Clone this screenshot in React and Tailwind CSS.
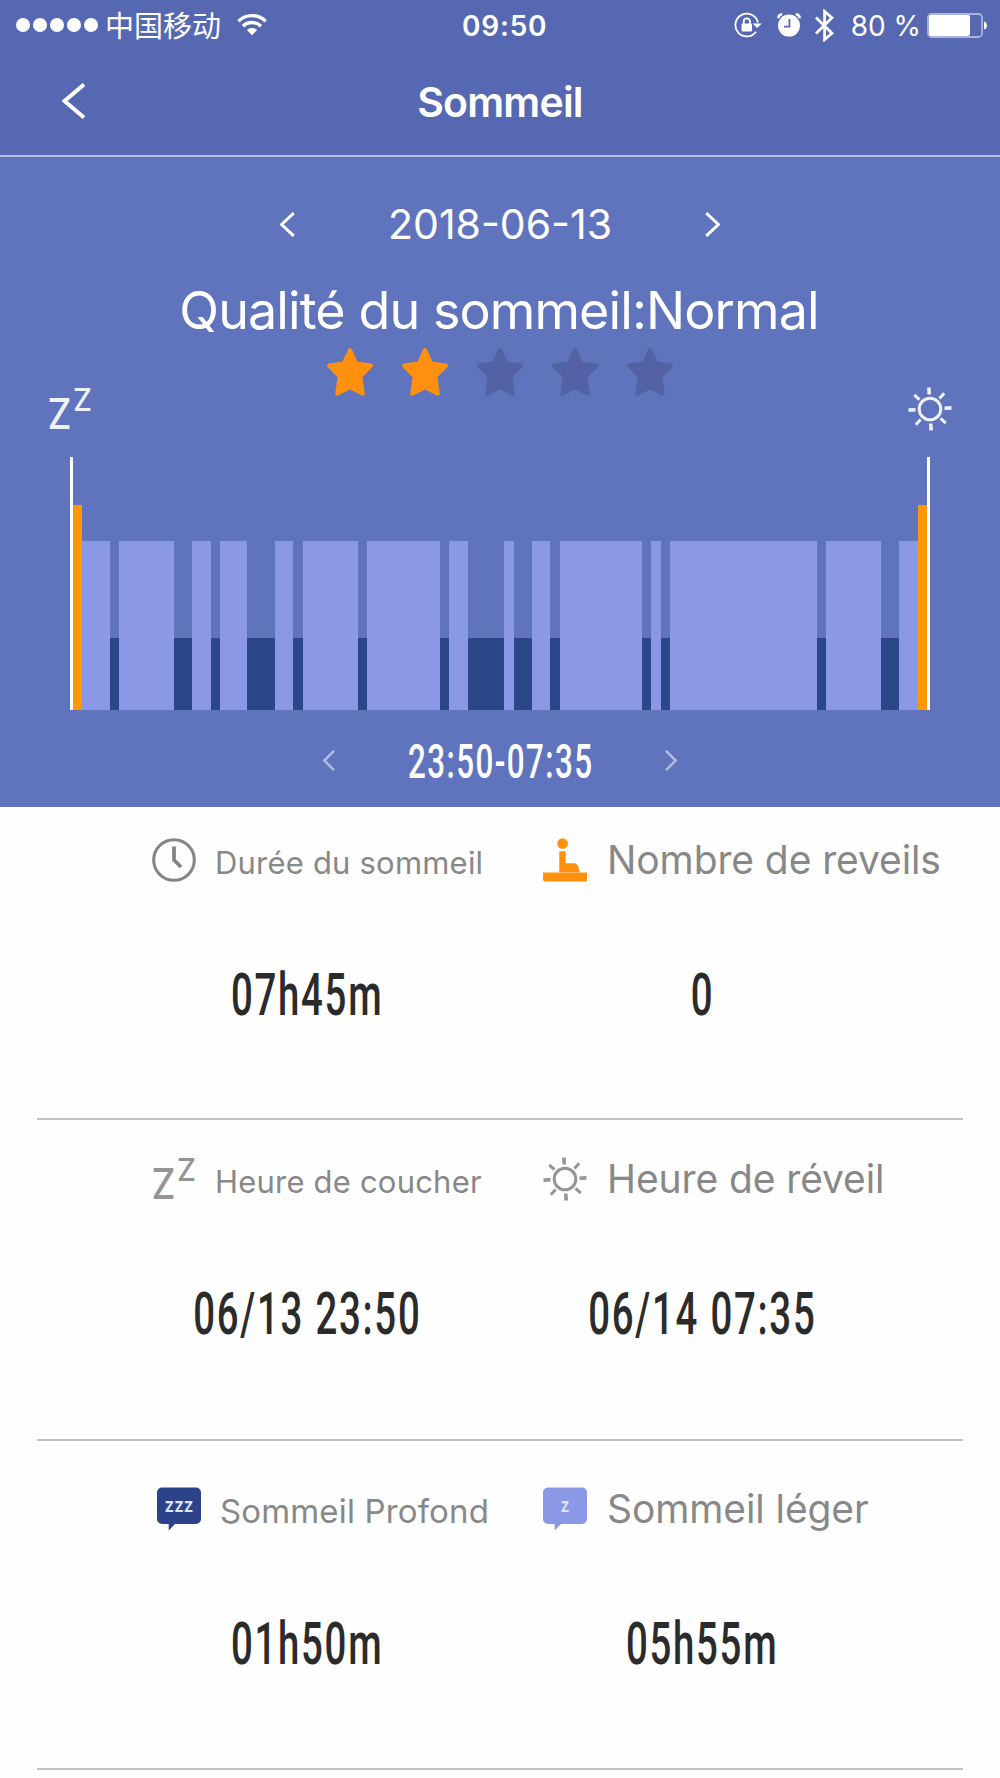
import clsx from 'clsx';

// Sleep phases of the night, each one as [type, number of 5 minute slots]
const PHASES = [
  ['awake', 1], ['light', 3], ['deep', 1], ['light', 6], ['deep', 2], ['light', 2],
  ['deep', 1], ['light', 3], ['deep', 3], ['light', 2], ['deep', 1], ['light', 6],
  ['deep', 1], ['light', 8], ['deep', 1], ['light', 2], ['deep', 4], ['light', 1],
  ['deep', 2], ['light', 2], ['deep', 1], ['light', 9], ['deep', 1], ['light', 1],
  ['deep', 1], ['light', 16], ['deep', 1], ['light', 6], ['deep', 2], ['light', 2],
  ['awake', 1],
];

const PHASE_STYLES = {
  awake: 'h-[205px] bg-[#ff9800]',
  light: 'h-[169px] bg-[#8b98e6]',
  deep: 'h-[72px] bg-[#2c4789]',
};

function Chevron({ right, className, strokeWidth = 3 }) {
  return (
    <svg viewBox="0 0 24 36" fill="none" stroke="currentColor" strokeWidth={strokeWidth} preserveAspectRatio="none" className={className}>
      <path d={right ? 'M2 1.5 21.5 18 2 34.5' : 'M22 1.5 2.5 18 22 34.5'} vectorEffect="non-scaling-stroke" />
    </svg>
  );
}

function WifiIcon() {
  return (
    <svg viewBox="0 0 30 23" className="w-[30px] h-[23px]" fill="none" stroke="currentColor" strokeWidth="3.4">
      <path d="M1.4 8.2a19.5 19.5 0 0 1 27.2 0" />
      <path d="M6 13.2a12.8 12.8 0 0 1 18 0" />
      <path d="M15 22.2 9.9 17a7.3 7.3 0 0 1 10.2 0Z" fill="currentColor" stroke="none" />
    </svg>
  );
}

function RotationLockIcon() {
  return (
    <svg viewBox="0 0 28 26" className="w-7 h-[26px]" fill="none" stroke="currentColor">
      <path d="M23.9 10.5A11.4 11.4 0 1 0 22 19.8" strokeWidth="1.8" />
      <path d="M18.6 11.5h9.2l-4.6 4.4Z" fill="currentColor" stroke="none" />
      <rect x="7.6" y="11.6" width="10.4" height="7.8" rx="1" fill="currentColor" stroke="none" />
      <path d="M9.7 12V9.4a3.1 3.1 0 0 1 6.2 0V12" strokeWidth="1.8" />
    </svg>
  );
}

function AlarmIcon() {
  return (
    <svg viewBox="0 0 24 24" className="w-6 h-6" fill="none" stroke="currentColor">
      <circle cx="12" cy="12.6" r="11" fill="currentColor" stroke="none" />
      <path d="M1.6 5.2a3 3 0 0 1 3.6-3.6M22.4 5.2a3 3 0 0 0-3.6-3.6" strokeWidth="2.6" />
      <path d="M12.4 6v7.6H7" stroke="#5668b2" strokeWidth="1.8" />
    </svg>
  );
}

function BluetoothIcon() {
  return (
    <svg viewBox="0 0 19 33" className="w-[19px] h-[33px]" fill="none" stroke="currentColor" strokeWidth="2.8">
      <path d="M1 8.5 17 24.2 9.6 30.6V2.4L17 8.8 1 24.5" />
    </svg>
  );
}

function BatteryIcon() {
  return (
    <svg viewBox="0 0 60 25" className="w-[60px] h-[25px]">
      <rect x="1" y="1" width="54" height="23" rx="3.5" fill="none" stroke="#aab4dc" strokeWidth="1.8" />
      <rect x="2" y="2" width="41" height="21" rx="2" fill="#fff" />
      <path d="M57 8.5c4 1 4 7 0 8Z" fill="#fff" />
    </svg>
  );
}

function SnoreIcon({ className }) {
  return (
    <svg viewBox="0 0 44 44" className={clsx('w-11 h-11 overflow-visible', className)} fill="currentColor" fontFamily="Inter, sans-serif" fontWeight="500">
      <text x="-0.5" y="42" fontSize="42" textLength="24" lengthAdjust="spacingAndGlyphs">Z</text>
      <text x="25" y="23.5" fontSize="31" textLength="19" lengthAdjust="spacingAndGlyphs">Z</text>
    </svg>
  );
}

function SunIcon({ className }) {
  return (
    <svg viewBox="0 0 44 44" className={clsx('w-11 h-11', className)} fill="none" stroke="currentColor">
      <circle cx="22" cy="22" r="10.8" strokeWidth="3" />
      <g strokeWidth="3.6" transform="rotate(-3 22 22)">
        <path d="M22 .5v7M22 36.5v7M.5 22h7M36.5 22h7" />
        <path d="m7 7 5 5M32 32l5 5M7 37l5-5M32 12l5-5" strokeWidth="3" />
      </g>
    </svg>
  );
}

function ClockIcon() {
  return (
    <svg viewBox="0 0 44 44" className="w-11 h-11 text-[#858585]" fill="none" stroke="currentColor">
      <circle cx="22" cy="22" r="20.3" strokeWidth="3" />
      <path d="M22 8.5V22l7 7" strokeWidth="3.8" />
    </svg>
  );
}

function WakeIcon() {
  return (
    <svg viewBox="0 0 44 44" className="w-11 h-11" fill="#ff9010">
      <circle cx="19.6" cy="5.6" r="5.3" />
      <path d="M16.3 13.3h6.4v12h8.6c3 0 4.2 3 5.4 8.9H15.6c.7-.7.7-1.6.7-3Z" />
      <path d="M0 34.6h44v9H2a2 2 0 0 1-2-2Z" />
    </svg>
  );
}

function BubbleIcon({ label, labelWidth, className }) {
  return (
    <svg viewBox="0 0 44 44" className={clsx('w-11 h-11', className)}>
      <path d="M5 .5h34a5 5 0 0 1 5 5V32a5 5 0 0 1-5 5H18l-6.3 6.5V37H5a5 5 0 0 1-5-5V5.5a5 5 0 0 1 5-5Z" fill="currentColor" />
      <text
        x="22"
        y="25"
        fontSize="20"
        fontWeight="600"
        textAnchor="middle"
        fill="#dfe4f6"
        fontFamily="Inter, sans-serif"
        textLength={labelWidth}
        lengthAdjust="spacingAndGlyphs"
      >
        {label}
      </text>
    </svg>
  );
}

function Star({ filled }) {
  return (
    <svg viewBox="0 0 48 50" className={clsx('w-12 h-[50px]', filled ? 'text-[#ff9010]' : 'text-[#5262a4]')}>
      <path
        d="M24 3 30.3 16.6 45 18.6 34.3 29.5 36.8 46.8 24 40.3 11.2 46.8 13.7 29.5 3 18.6 17.7 16.6Z"
        fill="currentColor"
        stroke="currentColor"
        strokeWidth="4"
        strokeLinejoin="round"
      />
    </svg>
  );
}

// Narrow digits used for all of the measured values
function Narrow({ className, children }) {
  return (
    <span className={clsx("inline-block scale-x-[0.64] font-['Roboto',sans-serif] font-medium whitespace-nowrap", className)}>
      {children}
    </span>
  );
}

function Stat({ icon, label, value, small, className, labelClassName = 'text-[31px] tracking-[0.2px]' }) {
  return (
    <div>
      <div className={clsx('flex items-center h-11', className)}>
        {icon}
        <span
          className={clsx(
            'whitespace-nowrap text-[#888888]',
            small ? 'ml-[19px] mt-[5px]' : 'ml-5 -mt-[2px] text-[39px] tracking-[-0.1px]',
            small && labelClassName
          )}
        >
          {label}
        </span>
      </div>
      <div className={clsx('mt-[83px] h-[60px] flex justify-center items-center', small ? 'w-[310px]' : 'w-[318px]')}>
        <Narrow className="text-[60px] leading-[60px] tracking-[2.7px] text-[#2b2b2b]">{value}</Narrow>
      </div>
    </div>
  );
}

function StatRow({ className, children }) {
  return (
    <section className={clsx('mx-[37px] pl-[115px] grid grid-cols-[391px_1fr] border-b-2 border-[#c2c2c2]', className)}>
      {children}
    </section>
  );
}

export default function App() {
  return (
    <div className="w-[1000px] h-[1778px] overflow-hidden bg-[#fefefe] font-['Inter','Noto_Sans_CJK_SC',sans-serif] leading-none">
      <header className="h-[157px] bg-[#5668b2] border-b-2 border-[#b3bde2] text-white">
        <div className="h-[50px] pl-4 pr-[13px] flex items-center">
          <div className="w-[446px] flex items-center">
            <div className="flex gap-[3px]">
              {[0, 1, 2, 3, 4].map((dot) => (
                <span key={dot} className="size-[14px] rounded-full bg-white" />
              ))}
            </div>
            <span className="ml-[7px] -mt-px text-[29px] font-['Noto_Sans_CJK_SC',sans-serif] font-normal">中国移动</span>
            <span className="ml-4 -mt-0.5"><WifiIcon /></span>
          </div>
          <span className="mt-px text-[28px] font-semibold tracking-[0.8px]">09:50</span>
          <div className="ml-auto flex items-center">
            <RotationLockIcon />
            <span className="ml-[15px]"><AlarmIcon /></span>
            <span className="ml-[14px]"><BluetoothIcon /></span>
            <span className="ml-[17px] mr-[6px] mt-px text-[28px]">80 %</span>
            <BatteryIcon />
          </div>
        </div>
        <div className="h-[105px] px-[62px] flex items-center">
          <Chevron className="w-6 h-9 -mt-[3px]" strokeWidth={4} />
          <h1 className="flex-1 pr-6 text-center text-[41px] font-semibold tracking-[-0.8px]">Sommeil</h1>
        </div>
      </header>

      <main>
        <section className="h-[650px] bg-[#6074be] text-white">
          <div className="pt-[42px] flex justify-center items-center">
            <Chevron className="w-[15px] h-[25px]" />
            <span className="h-[50px] w-[410px] text-center text-[41px] leading-[50px]">2018-06-13</span>
            <Chevron right className="w-[15px] h-[25px]" />
          </div>
          <p className="mt-[31px] pr-0.5 text-center text-[52px] leading-[62px] tracking-[-0.9px] whitespace-nowrap">
            Qualité du sommeil:Normal
          </p>
          <div className="mt-[5px] flex justify-center gap-[27px]">
            {[1, 2, 3, 4, 5].map((n) => (
              <Star key={n} filled={n <= 2} />
            ))}
          </div>
          <div className="-mt-[10px] px-12 flex justify-between">
            <SnoreIcon className="text-[#eef0fa]" />
            <SunIcon className="text-[#eef0fa]" />
          </div>
          <div className="mt-[26px] mx-[70px] h-[253px] border-x-[3px] border-white flex items-end">
            {PHASES.map(([type, slots], i) => (
              <div key={i} className={PHASE_STYLES[type]} style={{ width: `${(slots / 93) * 100}%` }} />
            ))}
          </div>
          <div className="mt-[25px] flex justify-center items-center">
            <Chevron className="w-3 h-[21px] text-[#b3bce3]" strokeWidth={2.5} />
            <span className="w-[330px] h-[50px] pt-0.5 pl-0.5 flex justify-center">
              <Narrow className="text-[49px] leading-[50px] tracking-[2.2px]">23:50-07:35</Narrow>
            </span>
            <Chevron right className="w-3 h-[21px] text-[#b3bce3]" strokeWidth={2.5} />
          </div>
        </section>

        <StatRow className="h-[313px] pt-[31px]">
          <Stat small icon={<ClockIcon />} label="Durée du sommeil" value="07h45m" />
          <Stat icon={<WakeIcon />} label="Nombre de reveils" value="0" />
        </StatRow>
        <StatRow className="h-[321px] pt-[37px]">
          <Stat small icon={<SnoreIcon className="text-[#959595]" />} label="Heure de coucher" value="06/13 23:50" />
          <Stat icon={<SunIcon className="text-[#959595]" />} label="Heure de réveil" value="06/14 07:35" />
        </StatRow>
        <StatRow className="h-[329px] pt-[46px]">
          <Stat
            small
            className="ml-[5px]"
            labelClassName="text-[33px] tracking-[0.15px]"
            icon={<BubbleIcon label="zzz" labelWidth="29" className="text-[#2c4289]" />}
            label="Sommeil Profond"
            value="01h50m"
          />
          <Stat icon={<BubbleIcon label="z" labelWidth="9" className="text-[#8b98e6]" />} label="Sommeil léger" value="05h55m" />
        </StatRow>
      </main>
    </div>
  );
}
